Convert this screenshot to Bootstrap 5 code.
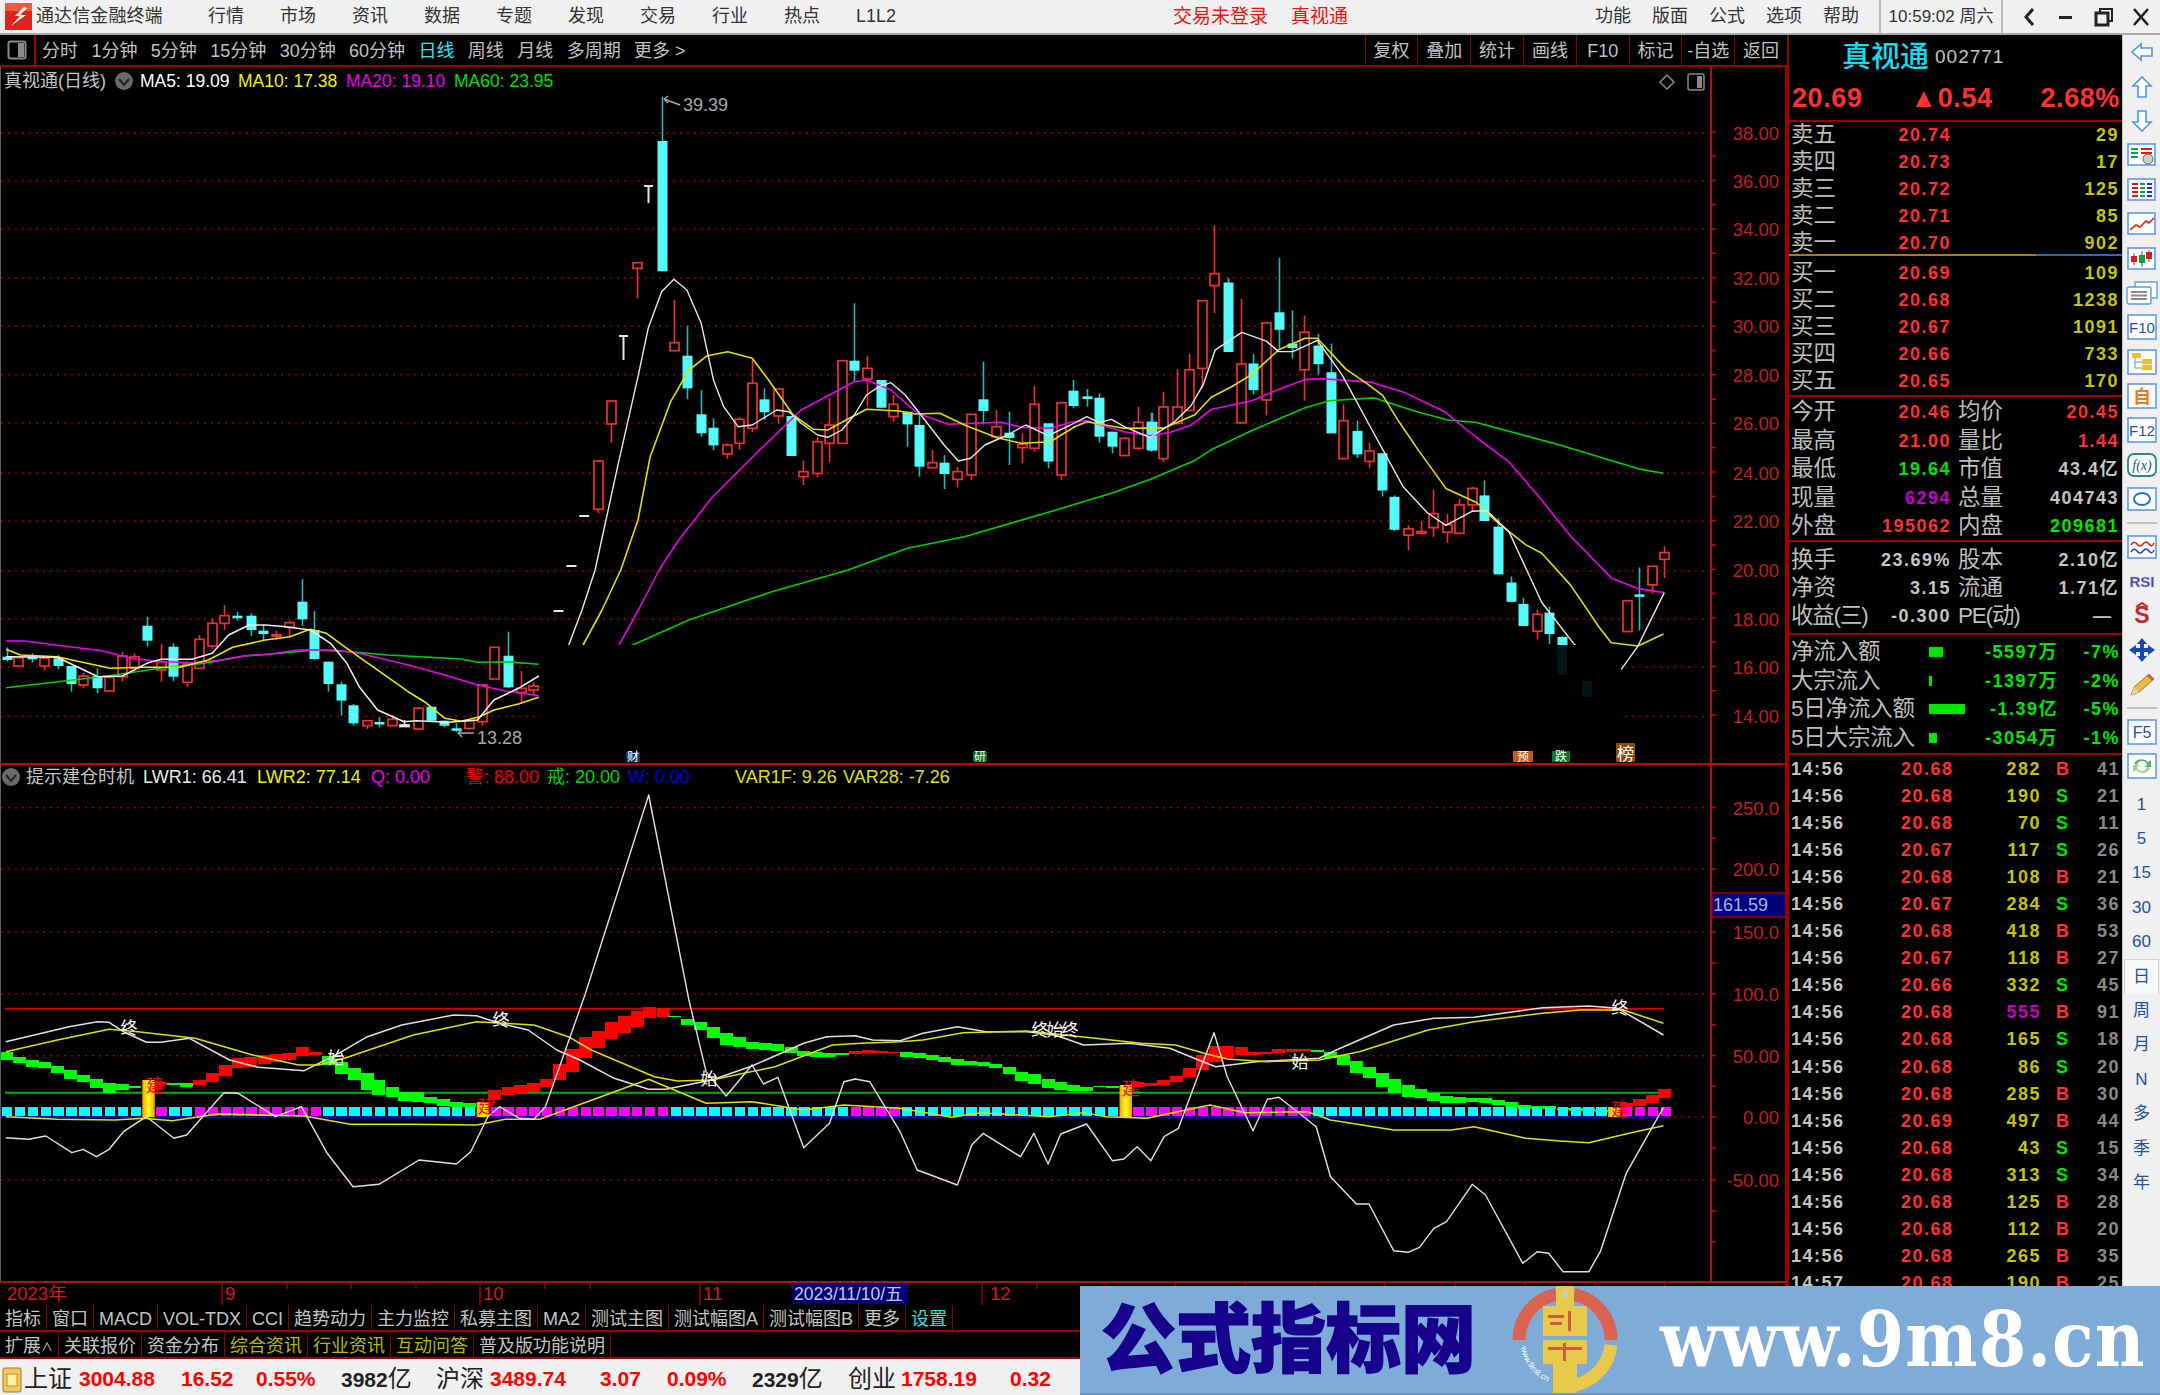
<!DOCTYPE html>
<html lang="zh-CN">
<head>
<meta charset="utf-8">
<title>通达信金融终端</title>
<link href="https://cdn.jsdelivr.net/npm/bootstrap@5.3.0/dist/css/bootstrap.min.css" rel="stylesheet">
<style>
html,body{margin:0;padding:0;background:#000;}
body{width:2160px;height:1395px;overflow:hidden;position:relative;font-family:"Liberation Sans","Noto Sans CJK SC",sans-serif;}
.tbar{height:35px;background:#f0f0f0;border-bottom:2px solid #a8a8a8;color:#333;font-size:18px;line-height:33px;}
.tbar-logo{width:36px;}
.tbar-name{width:172px;letter-spacing:.1px;}
.tbar-menu{gap:36px;}
.tbar-alert{color:#f01010;margin-left:277px;gap:23px;font-size:19px;}
.tbar-right{gap:21px;}
.tbar-time{width:124px;margin-left:20px;margin-right:7px;border-left:2px solid #bbb;border-right:2px solid #bbb;font-size:17px;text-align:center;}
.tbar-ctl{width:37.5px;}
.mainrow{height:1324px;}
.leftcol{width:1787px;}
.tools{height:32px;background:#000;border-bottom:2px solid #a00000;color:#c0c0c0;font-size:18px;line-height:32px;}
.tools-ico{width:36px;border-right:2px solid #a00000;}
.tools-items{gap:13.4px;padding-left:6px;}
.tools-on{color:#33e8f0;}
.tools-cell{border-left:1.5px solid #8a0000;min-width:52.8px;text-align:center;}
.chart{display:block;width:1787px;height:1238px;}
.tabs{height:27px;border-bottom:2px solid #9a0000;color:#c4c4c4;font-size:18px;line-height:29px;overflow:hidden;}
.tab-it{padding:0 5px;border-right:1.5px solid #8a0000;white-space:nowrap;}
.tab-y{color:#b8b800;}
.tab-c{color:#33e0e0;}
.tab-up{font-size:12px;}
.panel{width:335px;border-left:2px solid #a00000;color:#bdbdbd;font-size:22.5px;overflow:hidden;}
.p-head{height:87px;border-bottom:2px solid #a00000;}
.p-name{height:44px;padding-left:53px;}
.p-stock{color:#16dcf0;font-size:29px;line-height:44px;font-weight:500;}
.p-code{color:#c4c4c4;font-size:19px;margin-left:6px;letter-spacing:1px;}
.p-price{color:#ff3232;font-weight:700;font-size:27px;letter-spacing:.6px;padding:0 2px 0 3px;line-height:38px;}
.rows{padding-left:2px;padding-right:2px;}
.b-sell{height:134px;border-bottom:2px solid;border-image:linear-gradient(90deg,#b07a10 0,#b07a10 247px,#2a6ab8 247px,#2a6ab8 100%) 1;}
.b-buy{height:141px;padding-top:4px;border-bottom:2px solid #a00000;}
.b-stat{height:145px;padding-top:1px;border-bottom:2px solid #a00000;}
.b-fin{height:93px;padding-top:4px;border-bottom:2px solid #a00000;}
.b-flow{height:120px;padding-top:3px;border-bottom:2px solid #a00000;}
.r27{height:26.9px;line-height:26.9px;}
.r28{height:28.5px;line-height:28.5px;}
.r29{height:28px;line-height:28px;}
.half{width:160px;}
.half2{width:161px;margin-left:7px;}
.tight{letter-spacing:-1.2px;white-space:nowrap;}
.num{font-weight:700;font-size:18px;letter-spacing:1.5px;white-space:nowrap;}
.c-r{color:#ff3232;}.c-y{color:#c4c400;}.c-g{color:#00e600;}.c-p{color:#c000c8;}.c-w{color:#c4c4c4;}.c-d{color:#8a8a8a;}
.fl-name{width:138px;white-space:nowrap;letter-spacing:-.2px;}
.fl-bar{width:50px;}
.fl-fill{display:block;height:10px;background:#00e600;}
.fl-val{width:79px;text-align:right;color:#00e600;}
.fl-pct{width:62px;text-align:right;color:#00e600;}
.trades{padding-top:1px;}
.tr-row{height:27.05px;line-height:27.05px;}
.t-time{width:110px;color:#c4c4c4;}
.t-price{width:46px;text-align:right;}
.t-vol{width:94px;text-align:right;}
.t-bs{width:17px;margin-left:15px;}
.t-cnt{flex:1;text-align:right;}
.side{width:38px;background:#f0f0f0;border-left:1px solid #c8c8c8;color:#24509e;font-size:17px;}
.s-it{height:34.4px;}
.s-sep{height:13px;}
.s-gap{margin-bottom:4px;}
.s-sep i{display:block;width:30px;border-top:2px solid #c0c0c0;}
.s-on{background:#f8f8f8;border:1px solid #d0d0d0;border-bottom:0;}
.botbar{height:36px;background:#f0f0f0;display:grid;grid-template-columns:24px 55px 102px 75px 85px 95px 54px 110px 67px 85px 96px 53px 109px 70px;font-size:21px;font-weight:700;line-height:40px;color:#222;white-space:nowrap;overflow:hidden;}
.bot-red{color:#f00;}
.bot-cn{font-size:24px;font-weight:400;color:#222;}
.bot-cj{font-weight:400;font-size:24px;}
.wm{position:absolute;left:1080px;top:1286px;width:1080px;height:109px;background:#7eabd8;padding-left:21px;border-bottom:2px solid #6a97c4;}
.wm-cn{width:375px;color:#17008c;font-size:75px;font-weight:900;-webkit-text-stroke:1.5px #17008c;line-height:100px;white-space:nowrap;}
.wm-logo{margin-left:34px;width:110px;height:109px;}
.wm-url{margin-left:40px;color:#fff;font-family:"DejaVu Serif",serif;font-weight:700;font-stretch:condensed;font-size:76px;letter-spacing:1px;line-height:100px;white-space:nowrap;}
.st{font-family:"Liberation Sans","Noto Sans CJK SC",sans-serif;font-size:17.5px;}
.st-cn{font-size:18px;}
.st-ind{font-size:18px;}
.st-ax{font-size:18.5px;fill:#c02020;text-anchor:end;}
.st-lbl{font-size:17px;fill:#fff;text-anchor:middle;}
.st-lbl3{font-size:17px;fill:#fff;text-anchor:middle;letter-spacing:-2px;}
.st-jian{font-size:18px;fill:#f00;text-anchor:middle;}
.st-flag{font-size:12px;fill:#fff;text-anchor:middle;}
.st-x{font-size:18.5px;fill:#d81818;}
</style>
</head>
<body>
<div class="tbar d-flex align-items-center">
  <div class="tbar-logo d-flex justify-content-center align-items-center">
    <svg width="27" height="27" viewBox="0 0 27 27"><rect width="27" height="27" fill="#d8261e"/><rect x="0" y="0" width="27" height="8" fill="#ee5a40"/><path d="M19 4 L10 13 L15 13 L6 23 L21 12 L15 12 L22 5 Z" fill="#fff"/></svg>
  </div>
  <div class="tbar-name">通达信金融终端</div>
  <div class="tbar-menu d-flex"><span>行情</span><span>市场</span><span>资讯</span><span>数据</span><span>专题</span><span>发现</span><span>交易</span><span>行业</span><span>热点</span><span>L1L2</span></div>
  <div class="tbar-alert d-flex"><span>交易未登录</span><span>真视通</span></div>
  <div class="tbar-right d-flex ms-auto"><span>功能</span><span>版面</span><span>公式</span><span>选项</span><span>帮助</span></div>
  <div class="tbar-time">10:59:02 周六</div>
  <div class="tbar-ctl d-flex justify-content-center"><svg width="14" height="20" viewBox="0 0 14 20"><path d="M11 2 L4 10 L11 18" fill="none" stroke="#222" stroke-width="3"/></svg></div>
  <div class="tbar-ctl d-flex justify-content-center"><svg width="16" height="20" viewBox="0 0 16 20"><rect x="1" y="9" width="13" height="3" fill="#222"/></svg></div>
  <div class="tbar-ctl d-flex justify-content-center"><svg width="20" height="20" viewBox="0 0 20 20"><path d="M6 5 V2 H18 V14 H14" fill="none" stroke="#222" stroke-width="2"/><rect x="2" y="6" width="12" height="12" fill="none" stroke="#222" stroke-width="3"/></svg></div>
  <div class="tbar-ctl d-flex justify-content-center"><svg width="18" height="20" viewBox="0 0 18 20"><path d="M2 2 L16 18 M16 2 L2 18" stroke="#222" stroke-width="2.6"/></svg></div>
</div>

<div class="mainrow d-flex">
  <div class="leftcol">
    <div class="tools d-flex">
      <div class="tools-ico d-flex justify-content-center align-items-center"><svg width="20" height="20" viewBox="0 0 20 20"><rect x="1.5" y="1.5" width="17" height="17" rx="2" fill="none" stroke="#8a8a8a" stroke-width="2"/><rect x="11" y="3" width="6" height="14" fill="#8a8a8a"/></svg></div>
      <div class="tools-items d-flex"><span>分时</span><span>1分钟</span><span>5分钟</span><span>15分钟</span><span>30分钟</span><span>60分钟</span><span class="tools-on">日线</span><span>周线</span><span>月线</span><span>多周期</span><span>更多 &gt;</span></div>
      <div class="d-flex ms-auto"><span class="tools-cell">复权</span><span class="tools-cell">叠加</span><span class="tools-cell">统计</span><span class="tools-cell">画线</span><span class="tools-cell">F10</span><span class="tools-cell">标记</span><span class="tools-cell">-自选</span><span class="tools-cell">返回</span></div>
    </div>
    <svg class="chart" viewBox="0 67 1787 1238" xmlns="http://www.w3.org/2000/svg">
      <defs>
        <linearGradient id="gold" x1="0" x2="1" y1="0" y2="0"><stop offset="0" stop-color="#f0a000"/><stop offset=".5" stop-color="#ffff20"/><stop offset="1" stop-color="#f0a000"/></linearGradient>
      </defs>
      <g id="geo"></g>
      <g class="st">
        <text class="st-cn" x="4" y="87" fill="#c4c4c4">真视通(日线)</text>
        <circle cx="124" cy="81" r="9" fill="#6a6a6a"/><path d="M119 79 L124 85 L129 79" fill="none" stroke="#222" stroke-width="2"/>
        <text x="140" y="87" fill="#fff">MA5: 19.09</text>
        <text x="238" y="87" fill="#f0f000">MA10: 17.38</text>
        <text x="346" y="87" fill="#f000f0">MA20: 19.10</text>
        <text x="454" y="87" fill="#00e000">MA60: 23.95</text>
        <text x="683" y="111" fill="#a8a8a8" font-size="18">39.39</text>
        <text x="477" y="744" fill="#a8a8a8" font-size="18">13.28</text>
        <path d="M1667 75 L1674 82 L1667 89 L1660 82 Z" fill="none" stroke="#8a8a8a" stroke-width="1.5"/>
        <rect x="1688" y="74" width="16" height="16" rx="2" fill="none" stroke="#8a8a8a" stroke-width="1.5"/><rect x="1697" y="76" width="5" height="12" fill="#8a8a8a"/>
        <circle cx="11" cy="777" r="9" fill="#6a6a6a"/><path d="M6 775 L11 781 L16 775" fill="none" stroke="#222" stroke-width="2"/>
        <text class="st-cn" x="26" y="783" fill="#c4c4c4">提示建仓时机</text>
        <text class="st-ind" x="143" y="783" fill="#e8e8e8">LWR1: 66.41</text>
        <text class="st-ind" x="257" y="783" fill="#f0f000">LWR2: 77.14</text>
        <text class="st-ind" x="371" y="783" fill="#f000f0">Q: 0.00</text>
        <text class="st-ind" x="466" y="783" fill="#f00000">警: 88.00</text>
        <text class="st-ind" x="547" y="783" fill="#00d800">戒: 20.00</text>
        <text class="st-ind" x="628" y="783" fill="#0000e0">W: 0.00</text>
        <text class="st-ind" x="735" y="783" fill="#e0e000">VAR1F: 9.26</text>
        <text class="st-ind" x="843" y="783" fill="#e0e000">VAR28: -7.26</text>
        <text class="st-ax" x="1779" y="140">38.00</text><text class="st-ax" x="1779" y="188">36.00</text><text class="st-ax" x="1779" y="236">34.00</text><text class="st-ax" x="1779" y="285">32.00</text><text class="st-ax" x="1779" y="333">30.00</text><text class="st-ax" x="1779" y="382">28.00</text><text class="st-ax" x="1779" y="430">26.00</text><text class="st-ax" x="1779" y="480">24.00</text><text class="st-ax" x="1779" y="528">22.00</text><text class="st-ax" x="1779" y="577">20.00</text><text class="st-ax" x="1779" y="626">18.00</text><text class="st-ax" x="1779" y="674">16.00</text><text class="st-ax" x="1779" y="723">14.00</text>
        <text class="st-ax" x="1779" y="815">250.0</text><text class="st-ax" x="1779" y="876">200.0</text><text class="st-ax" x="1779" y="939">150.0</text><text class="st-ax" x="1779" y="1001">100.0</text><text class="st-ax" x="1779" y="1063">50.00</text><text class="st-ax" x="1779" y="1124">0.00</text><text class="st-ax" x="1779" y="1187">-50.00</text>
        <rect x="1712" y="893" width="74" height="24" fill="#00007a" stroke="#a00000" stroke-width="1.5"/>
        <text x="1713" y="911" font-size="18" fill="#9fb4ff">161.59</text>
        <text class="st-x" x="7" y="1300">2023年</text><text class="st-x" x="225" y="1300">9</text><text class="st-x" x="483" y="1300">10</text><text class="st-x" x="703" y="1300">11</text><text class="st-x" x="990" y="1300">12</text>
        <rect x="793" y="1283" width="115" height="21" fill="#00007a"/>
        <text x="794" y="1300" font-size="17.5" fill="#c8c8d8">2023/11/10/五</text>
      </g>
      <g id="top"></g>
    </svg>
    <div class="tabs d-flex"><span class="tab-it">指标</span><span class="tab-it">窗口</span><span class="tab-it">MACD</span><span class="tab-it">VOL-TDX</span><span class="tab-it">CCI</span><span class="tab-it">趋势动力</span><span class="tab-it">主力监控</span><span class="tab-it">私募主图</span><span class="tab-it">MA2</span><span class="tab-it">测试主图</span><span class="tab-it">测试幅图A</span><span class="tab-it">测试幅图B</span><span class="tab-it">更多</span><span class="tab-it tab-c">设置</span></div>
    <div class="tabs d-flex"><span class="tab-it">扩展<span class="tab-up">∧</span></span><span class="tab-it">关联报价</span><span class="tab-it">资金分布</span><span class="tab-it tab-y">综合资讯</span><span class="tab-it tab-y">行业资讯</span><span class="tab-it tab-y">互动问答</span><span class="tab-it">普及版功能说明</span></div>
  </div>

  <div class="panel">
    <div class="p-head">
      <div class="p-name d-flex align-items-center"><span class="p-stock">真视通</span><span class="p-code">002771</span></div>
      <div class="p-price d-flex justify-content-between"><span>20.69</span><span>▲0.54</span><span>2.68%</span></div>
    </div>
    <div class="rows b-sell">
      <div class="r27 d-flex"><div class="half d-flex justify-content-between"><span>卖五</span><span class="num c-r">20.74</span></div><div class="half2 text-end num c-y">29</div></div>
      <div class="r27 d-flex"><div class="half d-flex justify-content-between"><span>卖四</span><span class="num c-r">20.73</span></div><div class="half2 text-end num c-y">17</div></div>
      <div class="r27 d-flex"><div class="half d-flex justify-content-between"><span>卖三</span><span class="num c-r">20.72</span></div><div class="half2 text-end num c-y">125</div></div>
      <div class="r27 d-flex"><div class="half d-flex justify-content-between"><span>卖二</span><span class="num c-r">20.71</span></div><div class="half2 text-end num c-y">85</div></div>
      <div class="r27 d-flex"><div class="half d-flex justify-content-between"><span>卖一</span><span class="num c-r">20.70</span></div><div class="half2 text-end num c-y">902</div></div>
    </div>
    <div class="rows b-buy">
      <div class="r27 d-flex"><div class="half d-flex justify-content-between"><span>买一</span><span class="num c-r">20.69</span></div><div class="half2 text-end num c-y">109</div></div>
      <div class="r27 d-flex"><div class="half d-flex justify-content-between"><span>买二</span><span class="num c-r">20.68</span></div><div class="half2 text-end num c-y">1238</div></div>
      <div class="r27 d-flex"><div class="half d-flex justify-content-between"><span>买三</span><span class="num c-r">20.67</span></div><div class="half2 text-end num c-y">1091</div></div>
      <div class="r27 d-flex"><div class="half d-flex justify-content-between"><span>买四</span><span class="num c-r">20.66</span></div><div class="half2 text-end num c-y">733</div></div>
      <div class="r27 d-flex"><div class="half d-flex justify-content-between"><span>买五</span><span class="num c-r">20.65</span></div><div class="half2 text-end num c-y">170</div></div>
    </div>
    <div class="rows b-stat">
      <div class="r28 d-flex"><div class="half d-flex justify-content-between"><span>今开</span><span class="num c-r">20.46</span></div><div class="half2 d-flex justify-content-between"><span>均价</span><span class="num c-r">20.45</span></div></div>
      <div class="r28 d-flex"><div class="half d-flex justify-content-between"><span>最高</span><span class="num c-r">21.00</span></div><div class="half2 d-flex justify-content-between"><span>量比</span><span class="num c-r">1.44</span></div></div>
      <div class="r28 d-flex"><div class="half d-flex justify-content-between"><span>最低</span><span class="num c-g">19.64</span></div><div class="half2 d-flex justify-content-between"><span>市值</span><span class="num c-w">43.4亿</span></div></div>
      <div class="r28 d-flex"><div class="half d-flex justify-content-between"><span>现量</span><span class="num c-p">6294</span></div><div class="half2 d-flex justify-content-between"><span>总量</span><span class="num c-w">404743</span></div></div>
      <div class="r28 d-flex"><div class="half d-flex justify-content-between"><span>外盘</span><span class="num c-r">195062</span></div><div class="half2 d-flex justify-content-between"><span>内盘</span><span class="num c-g">209681</span></div></div>
    </div>
    <div class="rows b-fin">
      <div class="r29 d-flex"><div class="half d-flex justify-content-between"><span>换手</span><span class="num c-w">23.69%</span></div><div class="half2 d-flex justify-content-between"><span>股本</span><span class="num c-w">2.10亿</span></div></div>
      <div class="r29 d-flex"><div class="half d-flex justify-content-between"><span>净资</span><span class="num c-w">3.15</span></div><div class="half2 d-flex justify-content-between"><span>流通</span><span class="num c-w">1.71亿</span></div></div>
      <div class="r29 d-flex"><div class="half d-flex justify-content-between"><span class="tight">收益(三)</span><span class="num c-w">-0.300</span></div><div class="half2 d-flex justify-content-between"><span class="tight">PE(动)</span><span class="num c-w">—&nbsp;</span></div></div>
    </div>
    <div class="rows b-flow">
      <div class="r28 d-flex align-items-center"><span class="fl-name">净流入额</span><span class="fl-bar"><i class="fl-fill" style="width:14px"></i></span><span class="fl-val num">-5597万</span><span class="fl-pct num">-7%</span></div>
      <div class="r28 d-flex align-items-center"><span class="fl-name">大宗流入</span><span class="fl-bar"><i class="fl-fill" style="width:3px"></i></span><span class="fl-val num">-1397万</span><span class="fl-pct num">-2%</span></div>
      <div class="r28 d-flex align-items-center"><span class="fl-name">5日净流入额</span><span class="fl-bar"><i class="fl-fill" style="width:36px"></i></span><span class="fl-val num">-1.39亿</span><span class="fl-pct num">-5%</span></div>
      <div class="r28 d-flex align-items-center"><span class="fl-name">5日大宗流入</span><span class="fl-bar"><i class="fl-fill" style="width:8px"></i></span><span class="fl-val num">-3054万</span><span class="fl-pct num">-1%</span></div>
    </div>
    <div class="rows trades">
      <div class="tr-row d-flex num"><span class="t-time">14:56</span><span class="t-price c-r">20.68</span><span class="t-vol c-y">282</span><span class="t-bs c-r">B</span><span class="t-cnt c-d">41</span></div>
      <div class="tr-row d-flex num"><span class="t-time">14:56</span><span class="t-price c-r">20.68</span><span class="t-vol c-y">190</span><span class="t-bs c-g">S</span><span class="t-cnt c-d">21</span></div>
      <div class="tr-row d-flex num"><span class="t-time">14:56</span><span class="t-price c-r">20.68</span><span class="t-vol c-y">70</span><span class="t-bs c-g">S</span><span class="t-cnt c-d">11</span></div>
      <div class="tr-row d-flex num"><span class="t-time">14:56</span><span class="t-price c-r">20.67</span><span class="t-vol c-y">117</span><span class="t-bs c-g">S</span><span class="t-cnt c-d">26</span></div>
      <div class="tr-row d-flex num"><span class="t-time">14:56</span><span class="t-price c-r">20.68</span><span class="t-vol c-y">108</span><span class="t-bs c-r">B</span><span class="t-cnt c-d">21</span></div>
      <div class="tr-row d-flex num"><span class="t-time">14:56</span><span class="t-price c-r">20.67</span><span class="t-vol c-y">284</span><span class="t-bs c-g">S</span><span class="t-cnt c-d">36</span></div>
      <div class="tr-row d-flex num"><span class="t-time">14:56</span><span class="t-price c-r">20.68</span><span class="t-vol c-y">418</span><span class="t-bs c-r">B</span><span class="t-cnt c-d">53</span></div>
      <div class="tr-row d-flex num"><span class="t-time">14:56</span><span class="t-price c-r">20.67</span><span class="t-vol c-y">118</span><span class="t-bs c-r">B</span><span class="t-cnt c-d">27</span></div>
      <div class="tr-row d-flex num"><span class="t-time">14:56</span><span class="t-price c-r">20.66</span><span class="t-vol c-y">332</span><span class="t-bs c-g">S</span><span class="t-cnt c-d">45</span></div>
      <div class="tr-row d-flex num"><span class="t-time">14:56</span><span class="t-price c-r">20.68</span><span class="t-vol c-p">555</span><span class="t-bs c-r">B</span><span class="t-cnt c-d">91</span></div>
      <div class="tr-row d-flex num"><span class="t-time">14:56</span><span class="t-price c-r">20.68</span><span class="t-vol c-y">165</span><span class="t-bs c-g">S</span><span class="t-cnt c-d">18</span></div>
      <div class="tr-row d-flex num"><span class="t-time">14:56</span><span class="t-price c-r">20.68</span><span class="t-vol c-y">86</span><span class="t-bs c-g">S</span><span class="t-cnt c-d">20</span></div>
      <div class="tr-row d-flex num"><span class="t-time">14:56</span><span class="t-price c-r">20.68</span><span class="t-vol c-y">285</span><span class="t-bs c-r">B</span><span class="t-cnt c-d">30</span></div>
      <div class="tr-row d-flex num"><span class="t-time">14:56</span><span class="t-price c-r">20.69</span><span class="t-vol c-y">497</span><span class="t-bs c-r">B</span><span class="t-cnt c-d">44</span></div>
      <div class="tr-row d-flex num"><span class="t-time">14:56</span><span class="t-price c-r">20.68</span><span class="t-vol c-y">43</span><span class="t-bs c-g">S</span><span class="t-cnt c-d">15</span></div>
      <div class="tr-row d-flex num"><span class="t-time">14:56</span><span class="t-price c-r">20.68</span><span class="t-vol c-y">313</span><span class="t-bs c-g">S</span><span class="t-cnt c-d">34</span></div>
      <div class="tr-row d-flex num"><span class="t-time">14:56</span><span class="t-price c-r">20.68</span><span class="t-vol c-y">125</span><span class="t-bs c-r">B</span><span class="t-cnt c-d">28</span></div>
      <div class="tr-row d-flex num"><span class="t-time">14:56</span><span class="t-price c-r">20.68</span><span class="t-vol c-y">112</span><span class="t-bs c-r">B</span><span class="t-cnt c-d">20</span></div>
      <div class="tr-row d-flex num"><span class="t-time">14:56</span><span class="t-price c-r">20.68</span><span class="t-vol c-y">265</span><span class="t-bs c-r">B</span><span class="t-cnt c-d">35</span></div>
      <div class="tr-row d-flex num"><span class="t-time">14:57</span><span class="t-price c-r">20.68</span><span class="t-vol c-y">190</span><span class="t-bs c-r">B</span><span class="t-cnt c-d">25</span></div>
    </div>
  </div>

  <div class="side d-flex flex-column align-items-center">
    <div class="s-it d-flex align-items-center"><svg width="24" height="20" viewBox="0 0 24 20"><path d="M2 10 L11 2 V6 H22 V14 H11 V18 Z" fill="#fff" stroke="#4d94e8" stroke-width="1.6"/></svg></div>
    <div class="s-it d-flex align-items-center"><svg width="22" height="24" viewBox="0 0 22 24"><path d="M11 2 L20 11 H15 V22 H7 V11 H2 Z" fill="#fff" stroke="#4d94e8" stroke-width="1.6"/></svg></div>
    <div class="s-it d-flex align-items-center"><svg width="22" height="24" viewBox="0 0 22 24"><path d="M11 22 L20 13 H15 V2 H7 V13 H2 Z" fill="#fff" stroke="#4d94e8" stroke-width="1.6"/></svg></div>
    <div class="s-it d-flex align-items-center"><svg width="30" height="24" viewBox="0 0 30 24"><rect x="1" y="1" width="27" height="21" fill="#fff" stroke="#5b9bea" stroke-width="1.6"/><path d="M4 6 H11 M4 10 H11 M4 14 H11" stroke="#08a048" stroke-width="2"/><path d="M14 6 H25 M14 10 H25" stroke="#e01818" stroke-width="2"/><circle cx="21" cy="16" r="5" fill="#ccc" stroke="#666"/></svg></div>
    <div class="s-it d-flex align-items-center"><svg width="30" height="24" viewBox="0 0 30 24"><rect x="1" y="1" width="27" height="21" fill="#fff" stroke="#5b9bea" stroke-width="1.6"/><path d="M5 6 H11 M5 10 H11 M5 14 H11 M5 18 H11" stroke="#e01818" stroke-width="2"/><path d="M13 6 H18 M13 10 H18 M13 14 H18 M13 18 H18" stroke="#08a048" stroke-width="2"/><path d="M20 6 H25 M20 10 H25 M20 14 H25 M20 18 H25" stroke="#1830d0" stroke-width="2"/></svg></div>
    <div class="s-it d-flex align-items-center"><svg width="30" height="24" viewBox="0 0 30 24"><rect x="1" y="1" width="27" height="21" fill="#fff" stroke="#5b9bea" stroke-width="1.6"/><path d="M3 18 L9 13 L13 15 L19 9 L22 11 L27 6" fill="none" stroke="#e01818" stroke-width="1.6"/></svg></div>
    <div class="s-it d-flex align-items-center"><svg width="30" height="24" viewBox="0 0 30 24"><rect x="1" y="1" width="27" height="21" fill="#fff" stroke="#5b9bea" stroke-width="1.6"/><path d="M7 6 V18 M15 4 V20 M22 3 V15" stroke="#555"/><rect x="4" y="9" width="6" height="6" fill="#e01818"/><rect x="12" y="8" width="6" height="8" fill="#08a048"/><rect x="19" y="5" width="6" height="7" fill="#e01818"/></svg></div>
    <div class="s-it d-flex align-items-center"><svg width="32" height="24" viewBox="0 0 32 24"><rect x="9" y="1" width="22" height="16" fill="#fff" stroke="#5b9bea" stroke-width="1.4"/><rect x="1" y="6" width="24" height="17" rx="2" fill="#fff" stroke="#5b9bea" stroke-width="1.4"/><path d="M5 11 H21 M5 14.5 H21 M5 18 H21" stroke="#888" stroke-width="1.8"/></svg></div>
    <div class="s-it d-flex align-items-center"><svg width="30" height="26" viewBox="0 0 30 26"><rect x="1" y="1" width="28" height="24" fill="#fff" stroke="#5b9bea" stroke-width="1.6"/><text x="15" y="19" font-size="15" fill="#24509e" text-anchor="middle" font-family="Liberation Sans">F10</text></svg></div>
    <div class="s-it d-flex align-items-center"><svg width="30" height="26" viewBox="0 0 30 26"><rect x="1" y="1" width="28" height="24" fill="#fff" stroke="#5b9bea" stroke-width="1.6"/><path d="M8 8 V19 H15 M8 13 H15" fill="none" stroke="#5b9bea"/><rect x="5" y="4" width="9" height="5" fill="#f0c020"/><rect x="15" y="10" width="10" height="5" fill="#f0c020"/><rect x="15" y="16" width="10" height="5" fill="#f0c020"/></svg></div>
    <div class="s-it d-flex align-items-center"><svg width="30" height="26" viewBox="0 0 30 26"><rect x="1" y="1" width="28" height="24" fill="#fff" stroke="#5b9bea" stroke-width="1.6"/><text x="15" y="20" font-size="18" font-weight="700" fill="#f07820" text-anchor="middle" font-family="Noto Sans CJK SC">自</text></svg></div>
    <div class="s-it d-flex align-items-center"><svg width="30" height="26" viewBox="0 0 30 26"><rect x="1" y="1" width="28" height="24" fill="#fff" stroke="#5b9bea" stroke-width="1.6"/><text x="15" y="19" font-size="15" fill="#24509e" text-anchor="middle" font-family="Liberation Sans">F12</text></svg></div>
    <div class="s-it d-flex align-items-center"><svg width="30" height="26" viewBox="0 0 30 26"><rect x="1" y="2" width="28" height="22" rx="6" fill="#fff" stroke="#2a8a80" stroke-width="1.8"/><text x="15" y="18" font-size="14" font-style="italic" fill="#24509e" text-anchor="middle" font-family="Liberation Serif">f(x)</text></svg></div>
    <div class="s-it d-flex align-items-center"><svg width="30" height="26" viewBox="0 0 30 26"><rect x="1" y="2" width="28" height="22" fill="#fff" stroke="#5b9bea" stroke-width="1.6"/><ellipse cx="15" cy="13" rx="8" ry="6" fill="none" stroke="#2a70c8" stroke-width="2"/></svg></div>
    <div class="s-sep d-flex align-items-center"><i></i></div>
    <div class="s-it d-flex align-items-center"><svg width="30" height="24" viewBox="0 0 30 24"><rect x="1" y="1" width="28" height="22" fill="#fff" stroke="#5b9bea" stroke-width="1.6"/><path d="M4 10 Q7 5 10 9 T16 9 T22 9 T27 8" fill="none" stroke="#e01818" stroke-width="1.5"/><path d="M4 17 Q7 12 10 16 T16 16 T22 16 T27 15" fill="none" stroke="#2040d0" stroke-width="1.5"/></svg></div>
    <div class="s-it d-flex align-items-center"><svg width="32" height="22" viewBox="0 0 32 22"><text x="16" y="17" font-size="15" font-weight="700" fill="#3848a8" text-anchor="middle" font-family="Liberation Sans" stroke="#a8b0e0" stroke-width=".4">RSI</text></svg></div>
    <div class="s-it d-flex align-items-center"><svg width="28" height="28" viewBox="0 0 28 28"><text x="14" y="22" font-size="23" font-weight="700" fill="#c02828" text-anchor="middle" font-family="Liberation Sans">S</text><path d="M8 6 L14 2 L20 6" fill="none" stroke="#c02828" stroke-width="2"/></svg></div>
    <div class="s-it d-flex align-items-center"><svg width="28" height="26" viewBox="0 0 28 26"><path d="M14 1 L19 7 H16 V11 H20 V8 L27 13 L20 18 V15 H16 V19 H19 L14 25 L9 19 H12 V15 H8 V18 L1 13 L8 8 V11 H12 V7 H9 Z" fill="#1848b8"/></svg></div>
    <div class="s-it d-flex align-items-center"><svg width="28" height="26" viewBox="0 0 28 26"><path d="M3 24 L6 16 L21 3 L26 8 L11 21 Z" fill="#f0b840" stroke="#a07820"/><path d="M3 24 L6 16 L11 21 Z" fill="#e8d0a8"/><path d="M21 3 L26 8 L24 10 L19 5 Z" fill="#d06040"/></svg></div>
    <div class="s-sep d-flex align-items-center"><i></i></div>
    <div class="s-it d-flex align-items-center"><svg width="30" height="26" viewBox="0 0 30 26"><rect x="1" y="1" width="28" height="24" fill="#fff" stroke="#5b9bea" stroke-width="1.6"/><text x="15" y="19" font-size="16" fill="#24509e" text-anchor="middle" font-family="Liberation Sans">F5</text></svg></div>
    <div class="s-it s-gap d-flex align-items-center"><svg width="30" height="26" viewBox="0 0 30 26"><rect x="1" y="1" width="28" height="24" fill="#fff" stroke="#5b9bea" stroke-width="1.6"/><path d="M7 11 A8 7 0 0 1 21 9 L24 7 V14 H17 L20 12 A5 4 0 0 0 10 12 Z" fill="#58b868"/><path d="M23 15 A8 7 0 0 1 9 17 L6 19 V12 H13 L10 14 A5 4 0 0 0 20 14 Z" fill="#9ad090"/></svg></div>
    <div class="s-it d-flex align-items-center">1</div>
    <div class="s-it d-flex align-items-center">5</div>
    <div class="s-it d-flex align-items-center">15</div>
    <div class="s-it d-flex align-items-center">30</div>
    <div class="s-it d-flex align-items-center">60</div>
    <div class="s-it s-on d-flex align-items-center px-2">日</div>
    <div class="s-it d-flex align-items-center">周</div>
    <div class="s-it d-flex align-items-center">月</div>
    <div class="s-it d-flex align-items-center">N</div>
    <div class="s-it d-flex align-items-center">多</div>
    <div class="s-it d-flex align-items-center">季</div>
    <div class="s-it d-flex align-items-center">年</div>
  </div>
</div>

<div class="botbar">
  <span class="d-flex align-items-center justify-content-center"><svg width="20" height="26" viewBox="0 0 20 26"><rect x="1" y="1" width="18" height="24" rx="2" fill="#f0c860" stroke="#a87810"/><rect x="5" y="7" width="10" height="12" fill="#fff0a0" stroke="#c09020"/></svg></span>
  <span class="bot-cn">上证</span><span class="bot-red">3004.88</span><span class="bot-red">16.52</span><span class="bot-red">0.55%</span><span>3982<span class="bot-cj">亿</span></span>
  <span class="bot-cn">沪深</span><span class="bot-red">3489.74</span><span class="bot-red">3.07</span><span class="bot-red">0.09%</span><span>2329<span class="bot-cj">亿</span></span>
  <span class="bot-cn">创业</span><span class="bot-red">1758.19</span><span class="bot-red">0.32</span>
</div>

<div class="wm d-flex align-items-center">
  <div class="wm-cn">公式指标网</div>
  <svg class="wm-logo" viewBox="0 0 110 109">
    <path id="wmarc" d="M 11 62 A 45 45 0 0 0 50 100" fill="none"/>
    <path d="M 9 55 A 46 46 0 0 1 46 9.5" fill="none" stroke="#d9634f" stroke-width="13"/>
    <path d="M 64 9.5 A 46 46 0 0 1 101 55" fill="none" stroke="#d9634f" stroke-width="13"/>
    <path d="M 101 60 A 46 46 0 0 1 58 101" fill="none" stroke="#e8c94a" stroke-width="13"/>
    <text font-size="8" fill="#fff" font-family="Liberation Sans"><textPath href="#wmarc">www.9m8.cn</textPath></text>
    <rect x="46" y="1" width="18" height="20" fill="#e8c94a"/><ellipse cx="55" cy="9" rx="3.5" ry="5" fill="#d9c8a0"/>
    <rect x="33" y="21" width="44" height="30" fill="#e8c94a"/><rect x="38" y="30" width="16" height="3" fill="#c8603f"/><rect x="40" y="37" width="12" height="3" fill="#c8603f"/><rect x="58" y="26" width="3" height="20" fill="#c8603f"/>
    <rect x="33" y="55" width="44" height="24" fill="#e8c94a"/><rect x="38" y="62" width="34" height="3" fill="#c8603f"/><rect x="53" y="58" width="3" height="18" fill="#c8603f"/>
    <rect x="43" y="79" width="24" height="29" fill="#e8c94a"/>
  </svg>
  <div class="wm-url">www.9m8.cn</div>
</div>

<script>
(function(){
var z6=function(p,v){return [p/2.45,560+v/3];},
    z7=function(p,v){return [540+p/2.45,90+v/3];},
    z8=function(p,v){return [1150+p/2.45,220+v/2.85];},
    z9=function(p,v){return [p/1.742,760+v/3];},
    z10=function(p,v){return [900+p/1.742,760+v/3];};
var out=[];
function line(x1,y1,x2,y2,c,w,extra){out.push('<line x1="'+x1.toFixed(1)+'" y1="'+y1.toFixed(1)+'" x2="'+x2.toFixed(1)+'" y2="'+y2.toFixed(1)+'" stroke="'+c+'" stroke-width="'+(w||1)+'" '+(extra||'')+'/>');}
function rect(x,y,w,h,f,extra){out.push('<rect x="'+x.toFixed(1)+'" y="'+y.toFixed(1)+'" width="'+w.toFixed(1)+'" height="'+h.toFixed(1)+'" fill="'+f+'" '+(extra||'')+'/>');}
function poly(pts,c,w){out.push('<polyline fill="none" stroke="'+c+'" stroke-width="'+w+'" stroke-linejoin="round" points="'+pts.map(function(p){return p[0].toFixed(1)+','+p[1].toFixed(1);}).join(' ')+'"/>');}
function conv(z,a){return a.map(function(p){return z(p[0],p[1]);});}

/* grid */
[132.7,181,229,278,326,374.5,423,473,521,571,619,667,716.5].forEach(function(y){line(1,y,1711,y,'#a00000',1.5,'stroke-dasharray="2 5"');});
[807.7,869,932,994,1055.7,1117,1180].forEach(function(y){line(1,y,1711,y,'#a00000',1.5,'stroke-dasharray="2 5"');});

/* candles */
var CY='#55fbfb',RD='#f03030';
function candles(z,a){a.forEach(function(c){
  var A=z(c[0],c[1]),B=z(c[0],c[2]),C=z(c[0],c[3]),D=z(c[0],c[4]),x=Math.round(A[0]),k=c[5];
  var col=k=='c'?CY:(k=='w'?'#e8e8e8':RD);
  if(k=='c'){line(x+.5,A[1],x+.5,D[1],'#2ab8b8',1.6);rect(x-4.5,B[1],10,Math.max(C[1]-B[1],2.5),CY);}
  else{line(x+.5,A[1],x+.5,B[1],col,1.6);line(x+.5,C[1],x+.5,D[1],col,1.6);
    out.push('<rect x="'+(x-4)+'" y="'+B[1].toFixed(1)+'" width="9" height="'+Math.max(C[1]-B[1],1.5).toFixed(1)+'" fill="#000" stroke="'+col+'" stroke-width="1.7"/>');}
});}
candles(z6,[[16,262,290,300,305,'c'],[45,293,293,318,318,'r'],[78,280,290,298,308,'c'],[108,295,295,318,332,'r'],[141,285,295,318,328,'c'],[175,318,318,372,395,'c'],[204,338,348,375,385,'r'],[237,325,348,385,400,'c'],[266,352,352,393,393,'r'],[299,275,288,350,365,'r'],[329,280,290,325,335,'r'],[361,170,197,242,260,'c'],[395,252,305,330,365,'r'],[425,250,260,350,363,'c'],[457,305,312,367,380,'r'],[487,225,238,325,325,'r'],[519,175,190,258,268,'r'],[549,135,167,190,210,'r'],[581,155,167,171,182,'c'],[615,160,167,210,228,'c'],[645,195,212,222,240,'c'],[677,212,224,228,240,'r'],[707,182,188,202,232,'r'],[740,58,125,178,197,'c'],[770,153,210,297,300,'c'],[803,305,305,372,395,'c'],[836,365,373,422,467,'c'],[866,432,436,490,497,'c'],[898,482,482,497,507,'r'],[928,472,486,490,502,'c'],[961,465,478,497,497,'r'],[990,480,495,497,497,'w'],[1024,440,445,507,510,'r'],[1057,440,440,482,482,'c'],[1087,482,482,497,502,'c'],[1118,490,505,510,515,'c'],[1149,480,482,505,510,'r'],[1182,375,375,485,497,'r'],[1210,262,262,357,357,'r'],[1244,215,287,382,385,'c'],[1276,333,385,398,430,'r'],[1306,365,378,390,405,'r']]);
[[558,610],[571,565],[583.7,515]].forEach(function(d){rect(d[0]-4.5,d[1],10,2,'#e8e8e8');});
[[623,335,360],[648,185,203]].forEach(function(t){rect(t[0]-4,t[1],9,2,'#e8e8e8');line(t[0]+.5,t[1],t[0]+.5,t[2],'#e8e8e8',2);});
candles(z7,[[141,1113,1113,1258,1270,'r'],[175,933,933,1002,1058,'r'],[237,518,518,535,625,'r'],[299,20,153,544,544,'c'],[329,630,758,782,782,'r'],[361,708,797,895,928,'c'],[395,900,973,1030,1040,'c'],[425,985,1013,1066,1080,'c'],[457,1060,1065,1092,1107,'r'],[487,982,988,1060,1080,'r'],[519,810,880,1015,1027,'r'],[549,895,928,967,990,'c'],[582,897,897,978,1000,'r'],[615,978,978,1098,1098,'c'],[645,1112,1145,1160,1185,'r'],[678,1040,1055,1150,1162,'r'],[707,925,1005,1060,1117,'r'],[740,812,812,1060,1060,'r'],[770,640,812,842,875,'c'],[802,797,835,867,950,'r'],[836,870,870,953,953,'c'],[866,915,943,980,995,'r'],[898,965,965,1003,1070,'c'],[928,975,1005,1130,1160,'c'],[960,1080,1118,1133,1133,'r'],[990,1095,1118,1152,1197,'c'],[1022,1130,1145,1168,1192,'r'],[1057,973,973,1155,1170,'r'],[1086,815,928,963,1003,'c'],[1118,960,1010,1040,1045,'r'],[1148,965,1028,1044,1125,'c'],[1181,1030,1063,1073,1120,'r'],[1211,888,943,1075,1085,'r'],[1244,1000,1000,1115,1135,'c'],[1277,938,938,1155,1170,'r'],[1306,870,902,948,955,'c'],[1339,897,919,927,950,'c'],[1369,910,923,1040,1058,'c'],[1402,1025,1025,1070,1090,'c'],[1432,1045,1045,1097,1097,'r'],[1465,950,997,1075,1080,'r'],[1497,968,995,1080,1085,'c']]);
candles(z8,[[5,550,575,657,657,'c'],[33,490,533,680,690,'r'],[65,425,533,580,580,'r'],[95,382,427,543,543,'r'],[127,230,230,423,480,'r'],[157,15,153,187,265,'r'],[190,165,178,376,376,'c'],[223,225,410,578,578,'r'],[253,382,409,485,497,'c'],[285,293,293,513,557,'r'],[315,108,263,313,365,'c'],[348,258,352,365,395,'c'],[378,272,320,427,515,'r'],[411,325,358,411,440,'c'],[444,352,434,608,608,'c'],[474,525,572,680,680,'r'],[507,572,601,668,678,'c'],[536,635,658,688,707,'r'],[569,665,665,771,788,'c'],[598,785,789,883,887,'c'],[631,870,880,898,942,'r'],[664,858,888,893,893,'r'],[694,768,837,877,903,'r'],[727,838,868,890,920,'r'],[756,795,812,893,893,'r'],[790,760,765,812,830,'r'],[819,742,785,858,858,'c'],[852,850,874,1010,1010,'c'],[885,1016,1033,1088,1088,'c'],[915,1077,1094,1157,1157,'c'],[947,1110,1124,1172,1195,'r'],[977,1102,1119,1180,1208,'c'],[1010,1187,1188,1300,1300,'c'],[1168,1085,1085,1173,1173,'r'],[1197,990,1067,1073,1170,'c'],[1230,987,987,1040,1065,'r'],[1260,930,948,967,1020,'r']]);

/* MA lines */
poly(conv(z6,[[15,383],[120,368],[180,360],[280,345],[400,323],[500,310],[600,288],[700,278],[770,270],[860,275],[950,285],[1130,297],[1170,307],[1240,305],[1320,313]]),'#00d000',1.6);
poly(conv(z6,[[15,243],[60,243],[170,260],[250,272],[320,295],[400,305],[480,308],[540,300],[600,287],[660,283],[730,270],[820,270],[880,280],[1000,315],[1090,345],[1170,375],[1240,393],[1320,407]]),'#f000f0',1.6);
poly(conv(z6,[[15,268],[50,285],[140,290],[270,325],[345,322],[440,322],[510,300],[570,262],[650,240],[710,230],[760,208],[800,220],[850,265],[1000,395],[1040,425],[1090,475],[1130,484],[1175,470],[1210,450],[1270,432],[1320,412]]),'#e8e800',1.6);
poly(conv(z6,[[15,290],[140,292],[240,350],[300,348],[360,310],[395,298],[470,298],[520,280],[560,225],[610,195],[650,195],[700,200],[760,210],[810,250],[850,310],[880,380],[925,450],[990,485],[1020,482],[1100,487],[1170,480],[1210,420],[1270,385],[1320,348]]),'#f0f0f0',1.5);
function join(pre,a7,a8){return pre.concat(conv(z7,a7).filter(function(p){return p[0]<1152;})).concat(conv(z8,a8));}
poly(join([[628,647],[689,620],[771,592]],[[755,1440],[900,1375],[1040,1340],[1250,1265],[1400,1210],[1568,1130]],[[0,740],[110,685],[150,655],[250,600],[300,575],[380,535],[440,515],[550,507],[650,545],[730,570],[800,577],[1000,640],[1130,685],[1200,710],[1258,722]]),'#00d000',1.6);
poly(join([[618,647],[640,607]],[[292,1440],[340,1350],[420,1225],[530,1090],[640,960],[770,875],[800,870],[860,900],[925,970],[1000,1003],[1130,997],[1180,1012],[1250,1015],[1300,997],[1340,992],[1430,1025],[1500,1040],[1568,1020]],[[0,615],[50,605],[100,585],[150,540],[250,515],[310,485],[380,455],[420,452],[540,462],[620,490],[720,545],[800,620],[880,690],[950,785],[1030,900],[1130,1020],[1195,1050],[1260,1062]]),'#f000f0',1.6);
poly(join([[582,647],[602,610]],[[198,1440],[240,1290],[270,1100],[320,935],[365,840],[410,797],[460,785],[520,805],[560,870],[620,975],[670,1018],[705,1020],[750,990],[800,958],[880,963],[920,972],[980,970],[1040,1005],[1120,1043],[1180,1060],[1250,1055],[1310,1010],[1340,995],[1430,1015],[1530,1015],[1568,995]],[[0,593],[35,593],[70,575],[110,555],[150,505],[200,475],[250,440],[315,370],[380,337],[410,337],[480,425],[530,465],[570,500],[610,575],[660,660],[725,765],[800,805],[850,860],[920,925],[960,950],[1030,1040],[1100,1160],[1130,1205],[1195,1214],[1258,1180]]),'#e0e000',1.6);
poly(join([[568,647],[582,610]],[[135,1440],[190,1130],[240,860],[265,715],[298,605],[328,568],[360,600],[395,700],[425,870],[450,950],[485,1010],[520,1005],[580,960],[610,965],[640,1000],[680,1035],[705,1042],[740,1020],[770,975],[800,915],[830,890],[860,878],[895,915],[930,970],[990,1065],[1025,1113],[1055,1105],[1090,1065],[1145,1035],[1190,1005],[1245,1037],[1300,1005],[1340,980],[1370,998],[1400,988],[1435,1012],[1500,1030],[1568,1010]],[[0,620],[60,575],[100,530],[130,470],[160,370],[225,320],[285,345],[315,375],[350,375],[410,343],[470,440],[540,590],[620,760],[680,835],[725,870],[790,830],[825,828],[880,890],[960,1090],[1040,1210],[1155,1280],[1195,1215],[1260,1062]]),'#e8e8e8',1.4);

/* black cover over the low part of the main pane */
rect(541,645,1080,100,'#000');
rect(1557,645,10,30,'#021414');rect(1582,681,10,16,'#021414');
/* high/low arrows */
line(664,99,680,105,'#a8a8a8',1.5);line(664,99,668,96,'#a8a8a8',1.5);line(664,99,668,103,'#a8a8a8',1.5);
line(458,733,474,733,'#a8a8a8',1.5);line(458,733,462,730,'#a8a8a8',1.5);line(458,733,462,737,'#a8a8a8',1.5);

/* flags */
rect(626,752,14,10,'#10386c');rect(973,752,14,10,'#0a6a1e');rect(1513,751,20,11,'#c85a18');rect(1552,751,18,11,'#0a7a1e');rect(1616,743,19,19,'#8a4a10');

/* indicator */
line(5,1008.7,1664,1008.7,'#d00000',2);
line(5,1092.7,1664,1092.7,'#00b000',2);
var RB='#ff0000',GB='#00ff00';
function bands(z,a){a.forEach(function(b){var p=z(b[0],b[1]),q=z(b[0],b[2]);rect(p[0]-6.5,p[1],13,q[1]-p[1],b[3]=='r'?RB:GB,'shape-rendering="crispEdges"');});}
bands(z9,[[12,876,900],[34,890,910],[56,900,922],[78,905,925],[100,917,938],[123,930,958],[146,945,965],[168,958,985],[190,970,998],[213,972,990],[235,978,985],[280,965,975,'r'],[303,968,975],[325,970,980],[347,960,975,'r'],[370,938,965,'r'],[392,915,948,'r'],[415,895,925,'r'],[437,890,920,'r'],[460,885,912,'r'],[482,882,905,'r'],[505,880,900,'r'],[527,862,888,'r'],[549,875,885,'r'],[572,888,915],[594,905,942],[617,925,960],[640,940,990],[660,960,1005],[683,980,1012],[705,995,1022],[728,997,1025],[750,1010,1030],[773,1018,1038],[795,1025,1042],[818,1030,1042],[862,990,1020,'r'],[885,980,1005,'r'],[907,975,1000,'r'],[930,970,995,'r'],[952,958,980,'r'],[975,912,960,'r'],[997,868,935,'r'],[1020,830,895,'r'],[1042,812,865,'r'],[1065,785,838,'r'],[1087,768,820,'r'],[1110,752,800,'r'],[1132,740,775,'r'],[1155,745,770,'r'],[1175,768,772],[1197,778,795],[1220,785,810],[1243,800,835],[1265,818,855],[1288,830,860],[1310,845,868],[1333,850,870],[1355,852,872],[1378,862,878],[1400,872,888],[1423,875,892],[1445,878,892],[1468,878,886],[1490,873,882,'r'],[1512,870,880,'r'],[1535,874,880,'r'],[1557,875,880,'r']]);
bands(z10,[[12,877,892],[34,880,895],[56,885,900],[78,892,905],[100,897,915],[122,903,915],[145,905,918],[167,912,925],[190,922,942],[212,935,962],[235,943,972],[258,958,985],[280,965,990],[303,975,992],[325,980,992],[347,978,982],[370,978,984],[413,965,980,'r'],[437,968,978,'r'],[459,960,975,'r'],[482,947,965,'r'],[504,925,950,'r'],[527,885,930,'r'],[549,858,905,'r'],[571,858,893,'r'],[594,862,885,'r'],[616,875,885,'r'],[638,875,882,'r'],[660,866,878,'r'],[683,867,877,'r'],[705,867,872,'r'],[727,870,875],[750,875,895],[772,885,915],[795,902,938],[817,920,955],[840,938,982],[862,957,998],[885,975,1010],[907,988,1015],[930,1000,1022],[952,1008,1028],[975,1010,1028],[997,1015,1025],[1020,1015,1028],[1042,1020,1035],[1065,1025,1042],[1087,1035,1048],[1110,1037,1048],[1132,1037,1048],[1155,1043,1050],[1177,1045,1052],[1200,1045,1052],[1222,1050,1056],[1265,1030,1050,'r'],[1288,1018,1038,'r'],[1310,1005,1030,'r'],[1332,988,1015,'r']]);

/* cyan / magenta squares + gold bars */
rect(0,1116.3,1666,2,'#0010d0');
var gold={11:1080,37:1102,87:1085,125:1107};
function sqColor(i){
  if(i==13||i==14) return '#00ffff';
  if(i==12||(i>=15&&i<=24)||(i>=38&&i<=51)||(i>=66&&i<=69)||(i>=88&&i<=101)||(i>=126)) return '#ff00ff';
  return '#00ffff';
}
for(var i=0;i<130;i++){
  var x=6.9+12.857*i;
  if(gold[i]){out.push('<rect x="'+(x-6).toFixed(1)+'" y="'+gold[i]+'" width="12.5" height="'+(1117-gold[i])+'" fill="url(#gold)"/>');}
  else rect(x-5,1107.3,10.5,9,sqColor(i),'shape-rendering="crispEdges"');
}
/* indicator lines */
poly(conv(z9,[[10,845],[60,825],[120,800],[170,785],[190,787],[215,815],[255,847],[280,847],[330,835],[400,900],[450,922],[530,932],[590,880],[640,830],[700,795],[790,765],[830,767],[870,790],[920,810],[970,870],[1010,900],[1070,955],[1130,988],[1160,988],[1240,960],[1310,918],[1400,850],[1440,830],[1490,827],[1520,840],[1568,842]]).concat(conv(z10,[[40,820],[100,800],[150,815],[220,815],[270,825],[320,855],[400,850],[470,865],[520,900],[550,920],[620,905],[730,895],[760,870],[860,795],[930,775],[1000,772],[1120,743],[1200,738],[1250,745],[1330,825]])),'#e0e0e0',1.5);
poly(conv(z9,[[10,875],[100,840],[190,808],[240,815],[340,835],[440,885],[520,915],[555,915],[600,895],[720,825],[830,785],[930,795],[990,830],[1030,870],[1140,950],[1180,963],[1240,960],[1350,920],[1450,855],[1500,850],[1568,845]]).concat(conv(z10,[[40,840],[110,818],[220,813],[340,835],[420,850],[480,855],[530,880],[570,897],[640,905],[730,900],[800,875],[920,810],[1000,785],[1120,760],[1185,750],[1260,750],[1330,790]])),'#e0e000',1.5);
poly(conv(z9,[[10,1070],[100,1078],[200,1080],[250,1075],[300,1082],[380,1062],[530,1068],[610,1093],[720,1093],[830,1095],[880,1078],[940,1078],[1130,958],[1230,1030],[1310,1025],[1400,1050],[1470,1035],[1568,1045]]).concat(conv(z10,[[90,1072],[140,1058],[260,1070],[320,1058],[360,1070],[430,1075],[540,1035],[600,1058],[710,1055],[750,1080],[860,1110],[960,1110],[1000,1100],[1090,1135],[1150,1143],[1200,1148],[1270,1120],[1330,1097]])),'#e0e000',1.6);
poly(conv(z9,[[10,1133],[50,1138],[80,1128],[125,1178],[145,1168],[168,1190],[190,1168],[215,1115],[255,1070],[303,1135],[325,1125],[390,998],[415,1000],[480,1070],[525,1040],[570,1180],[615,1280],[660,1273],[730,1200],[795,1212],[820,1175],[850,1070],[870,1040],[905,1075],[930,1078],[950,1040],[1020,700],[1130,105],[1200,720],[1230,935],[1265,1008],[1310,915],[1330,972],[1355,952],[1400,1163],[1445,1090],[1470,965],[1490,957],[1515,965],[1568,1115]]).concat(conv(z10,[[30,1230],[100,1275],[125,1155],[145,1120],[210,1190],[233,1120],[258,1212],[280,1122],[325,1092],[370,1202],[390,1197],[413,1160],[437,1202],[460,1130],[485,1105],[547,818],[570,950],[615,1112],[640,1018],[660,1012],[725,1100],[750,1250],[795,1332],[817,1332],[860,1472],[885,1477],[905,1462],[930,1405],[952,1385],[997,1273],[1020,1305],[1085,1510],[1110,1475],[1130,1480],[1155,1535],[1200,1535],[1220,1475],[1265,1240],[1330,1042]])),'#e0e0e0',1.4);

/* panel frame */
line(.5,67,.5,1283,'#606060',1);
line(1711,67,1711,1283,'#b01010',2);
line(1786,67,1786,1305,'#a00000',2);
line(0,764,1787,764,'#c00000',2);
line(0,1282,1787,1282,'#b01010',2);
for(var p=38;p>=14;p--){var y=229+(34-p)*24.3;line(1711,y,1716,y,'#b01010',1.5);}
[807.7,838,869,900,932,963,994,1025,1055.7,1086,1117,1148,1180,1211,1242].forEach(function(y){line(1711,y,1716,y,'#b01010',1.5);});
[222,287,351,416,480,545,590,700,792,908,982,1037,1104,1175,1245,1315,1385,1455,1525,1595,1665].forEach(function(x){line(x,1283,x,(x==222||x==480||x==700||x==982)?1305:1289,'#a00000',1.5);});
document.getElementById('geo').innerHTML=out.join('');

/* labels drawn over */
var t=[],L=[['终',129,1034],['始',336,1064],['终',501,1026],['始',709,1085],['始',1300,1068],['终',1620,1014]];
L.forEach(function(l){t.push('<text class="st st-lbl" x="'+l[1]+'" y="'+l[2]+'">'+l[0]+'</text>');});
t.push('<text class="st st-lbl3" x="1054" y="1036">终始终</text>');
[[155,1092],[487,1113],[1131,1095],[1620,1116]].forEach(function(l){t.push('<text class="st st-jian" x="'+l[0]+'" y="'+l[1]+'">建</text>');});
[['财',633,761],['研',980,761],['预',1523,761],['跌',1561,761]].forEach(function(f){t.push('<text class="st st-flag" x="'+f[1]+'" y="'+f[2]+'">'+f[0]+'</text>');});
t.push('<text class="st" x="1625.5" y="760" font-size="18" fill="#fff" text-anchor="middle">榜</text>');
document.getElementById('top').innerHTML=t.join('');
})();
</script>
<script src="https://cdn.jsdelivr.net/npm/bootstrap@5.3.0/dist/js/bootstrap.bundle.min.js"></script>
</body>
</html>
